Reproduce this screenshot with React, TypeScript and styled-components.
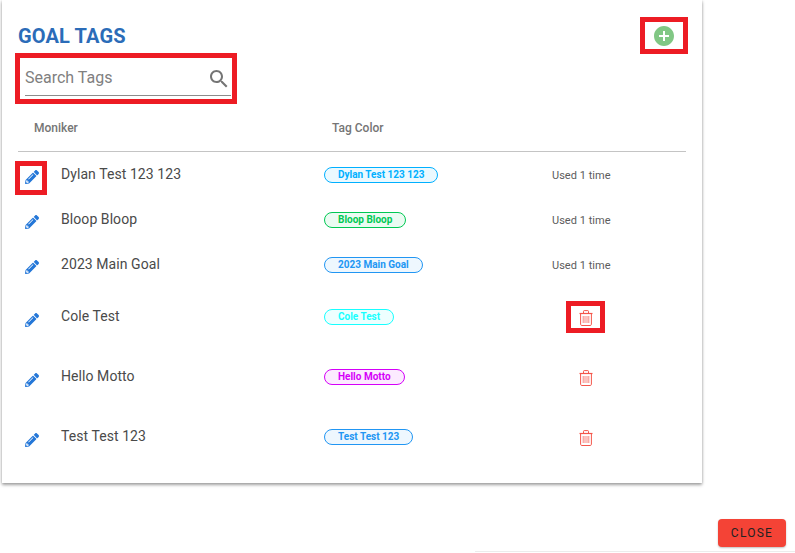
import React from "react";
import styled, { createGlobalStyle, css } from "styled-components";
import { FaPencilAlt } from "react-icons/fa";

const Global = createGlobalStyle`
  html, body { margin: 0; padding: 0; background: #fff; overflow: hidden; }
  body { font-family: Roboto, "Liberation Sans", sans-serif; }
`;

const Page = styled.div`
  width: 795px;
  height: 553px;
  display: flex;
  flex-direction: column;
  position: relative;
  overflow: hidden;
`;

const Card = styled.section`
  width: 700px;
  height: 483px;
  margin-left: 2px;
  flex: none;
  box-sizing: border-box;
  background: #fff;
  box-shadow: 0 2px 3px rgba(0, 0, 0, 0.35), 0 0 3px rgba(0, 0, 0, 0.14);
  padding: 24px 16px 16px 16px;
  display: flex;
  flex-direction: column;
`;

const TitleRow = styled.div`
  display: flex;
  justify-content: space-between;
  align-items: center;
  height: 24px;
`;

const Title = styled.h1`
  margin: 0;
  font-size: 20px;
  line-height: 24px;
  font-weight: 700;
  letter-spacing: 0.12px;
  color: #2b6cb8;
`;

const marked = css<{ $mark?: string }>`
  position: relative;
  ${(p) =>
    p.$mark &&
    css`
      &::after {
        content: "";
        position: absolute;
        inset: ${p.$mark};
        border: 5px solid #ed1c24;
        pointer-events: none;
      }
    `}
`;

const AddWrap = styled.div<{ $mark?: string }>`
  ${marked}
  width: 24px;
  height: 24px;
  margin-right: 10px;
  display: flex;
`;

const SearchWrap = styled.div<{ $mark?: string }>`
  ${marked}
  margin: 14px 0 0 7px;
  width: 206px;
  height: 34px;
  box-sizing: border-box;
  border-bottom: 1px solid #8c8c8c;
  display: flex;
  align-items: center;
  justify-content: space-between;
`;

const SearchText = styled.span`
  font-size: 16px;
  color: #808080;
  margin-top: -2px;
`;

const HeaderRow = styled.div`
  display: grid;
  grid-template-columns: 298px 1fr;
  height: 55px;
  margin-top: 1px;
  box-sizing: border-box;
  padding: 24px 0 0 16px;
  border-bottom: 1px solid #c4c4c4;
  font-size: 12px;
  line-height: 14px;
  font-weight: 500;
  color: #757575;
`;

const Row = styled.div<{ $tall?: boolean }>`
  display: grid;
  grid-template-columns: 43px 263px 228px 1fr;
  align-items: center;
  height: ${(p) => (p.$tall ? 60 : 45)}px;
`;

const EditCell = styled.div<{ $mark?: string }>`
  ${marked}
  width: 32px;
  height: 34px;
  display: flex;
  align-items: center;
  padding-left: 7px;
  box-sizing: border-box;
  margin-top: 5px;
  color: #2477d8;
`;

const Name = styled.div`
  font-size: 14px;
  line-height: 20px;
  color: #4a4a4a;
  letter-spacing: 0.07px;
  margin-top: -2px;
`;

const Chip = styled.span<{ $c: string }>`
  justify-self: start;
  box-sizing: border-box;
  height: 16px;
  padding: 0 13px;
  border-radius: 8px;
  border: 1px solid ${(p) => p.$c};
  background: ${(p) => p.$c}14;
  color: ${(p) => p.$c};
  font-size: 10px;
  line-height: 13px;
  font-weight: 700;
  white-space: nowrap;
`;

const Used = styled.div`
  font-size: 11px;
  letter-spacing: 0.03px;
  color: #5c5c5c;
  margin-top: 1px;
`;

const TrashCell = styled.div<{ $mark?: string }>`
  ${marked}
  width: 29px;
  height: 21px;
  margin-left: 19px;
  display: flex;
  align-items: center;
  justify-content: center;
  padding-top: 1px;
`;

const Footer = styled.div`
  display: flex;
  justify-content: flex-end;
  padding: 36px 9px 0 0;
`;

const CloseButton = styled.button`
  width: 68px;
  height: 28px;
  padding: 0;
  border: 0;
  border-radius: 4px;
  background: #f44336;
  color: #222;
  font-family: inherit;
  font-size: 12px;
  font-weight: 400;
  letter-spacing: 1.25px;
  box-shadow: 0 1px 2px rgba(0, 0, 0, 0.25);
`;

const Strip = styled.div`
  position: absolute;
  left: 475px;
  right: 0;
  bottom: 1px;
  height: 1px;
  background: #ececec;
`;

const Add = () => (
  <svg width="24" height="24" viewBox="0 0 24 24" fill="#81c784">
    <path d="M12 2C6.48 2 2 6.48 2 12s4.48 10 10 10 10-4.48 10-10S17.52 2 12 2zm5 11h-4v4h-2v-4H7v-2h4V7h2v4h4v2z" />
  </svg>
);

const Search = () => (
  <svg width="24" height="24" viewBox="0 0 24 24" fill="#757575">
    <path d="M15.5 14h-.79l-.28-.27C15.41 12.59 16 11.11 16 9.5 16 5.91 13.09 3 9.5 3S3 5.91 3 9.5 5.91 16 9.5 16c1.61 0 3.09-.59 4.23-1.57l.27.28v.79l5 4.99L20.49 19l-4.99-5zm-6 0C7.01 14 5 11.99 5 9.5S7.01 5 9.5 5 14 7.01 14 9.5 11.99 14 9.5 14z" />
  </svg>
);

const Trash = () => (
  <svg width="14" height="16" viewBox="0 0 14 16" fill="none" stroke="#f4574c" strokeWidth="1">
    <path d="M.5 3.5h13" strokeWidth="1.2" />
    <path d="M4.5 3.2V1.3c0-.4.3-.7.7-.7h3.6c.4 0 .7.3.7.7v1.9" />
    <path d="M1.6 3.7v10.6c0 .7.5 1.2 1.2 1.2h8.4c.7 0 1.2-.5 1.2-1.2V3.7" />
    <path d="M4.2 6v7M6 6v7M8 6v7M9.8 6v7" strokeWidth=".9" opacity=".8" />
  </svg>
);

type Item = { name: string; color: string; used: boolean };

const items: Item[] = [
  { name: "Dylan Test 123 123", color: "#00b0ff", used: true },
  { name: "Bloop Bloop", color: "#00c853", used: true },
  { name: "2023 Main Goal", color: "#2196f3", used: true },
  { name: "Cole Test", color: "#18ffff", used: false },
  { name: "Hello Motto", color: "#d500f9", used: false },
  { name: "Test Test 123", color: "#2196f3", used: false },
];

export default function App() {
  return (
    <Page>
      <Global />
      <Card>
        <TitleRow>
          <Title>GOAL TAGS</Title>
          <AddWrap $mark="-7px -12px -6px -12px">
            <Add />
          </AddWrap>
        </TitleRow>
        <SearchWrap $mark="-9px -6px -9px -10px">
          <SearchText>Search Tags</SearchText>
          <Search />
        </SearchWrap>
        <HeaderRow>
          <span>Moniker</span>
          <span>Tag Color</span>
        </HeaderRow>
        {items.map((item, i) => (
          <Row key={item.name} $tall={!item.used}>
            <EditCell $mark={i === 0 ? "1px 3px -1px -3px" : undefined}>
              <FaPencilAlt size={14} />
            </EditCell>
            <Name>{item.name}</Name>
            <Chip $c={item.color}>{item.name}</Chip>
            {item.used ? (
              <Used>Used 1 time</Used>
            ) : (
              <TrashCell $mark={i === 3 ? "-5px -5px -5px -5px" : undefined}>
                <Trash />
              </TrashCell>
            )}
          </Row>
        ))}
      </Card>
      <Footer>
        <CloseButton>CLOSE</CloseButton>
      </Footer>
      <Strip />
    </Page>
  );
}
